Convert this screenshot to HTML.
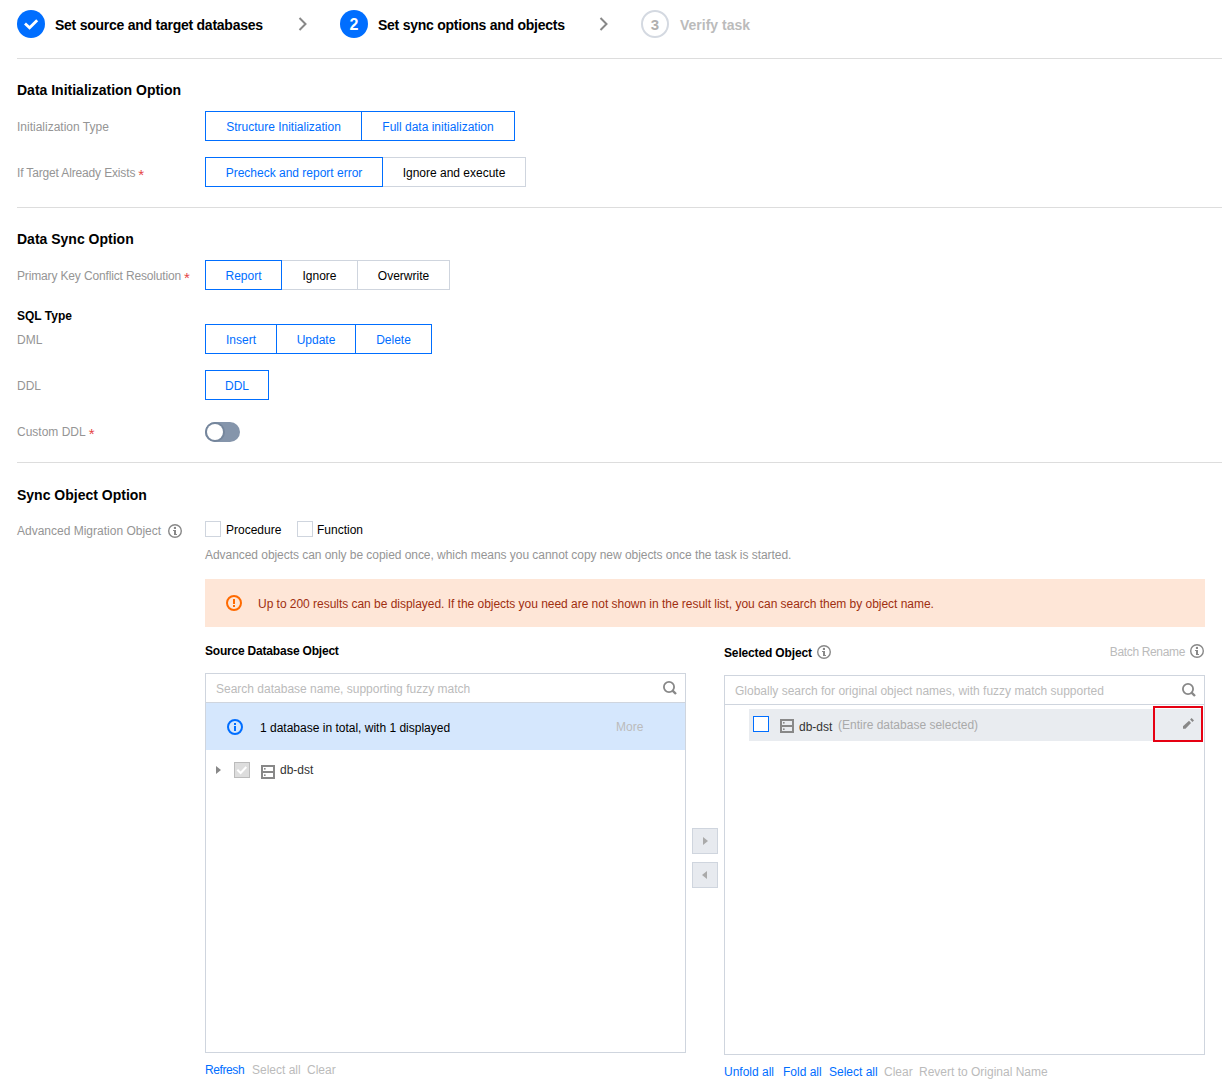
<!DOCTYPE html>
<html><head><meta charset="utf-8">
<style>
*{box-sizing:border-box;margin:0;padding:0}
html,body{width:1222px;height:1090px;overflow:hidden;background:#fff}
body{position:relative;font-family:"Liberation Sans",sans-serif;font-size:12px;color:#000}
.a{position:absolute}
.t{position:absolute;white-space:nowrap;font-size:12px;line-height:16px;height:16px}
.h{position:absolute;white-space:nowrap;font-size:14px;line-height:20px;height:20px;font-weight:bold;color:#000}
.st{letter-spacing:-0.25px}
.lbl{color:#959595}
.req{color:#e54545;margin-left:3px;position:relative;top:3px;font-size:15px;line-height:10px}
.hr{position:absolute;left:17px;right:0;height:1px;background:#dddddd}
.circ{position:absolute;top:10px;width:28px;height:28px;border-radius:50%;background:#006eff;color:#fff;font-weight:bold;font-size:14px;line-height:28px;text-align:center}
.chev{position:absolute;top:17px;width:9px;height:14px}
.btn{position:absolute;height:30px;border:1px solid #cfd5de;background:#fff;color:#000;font-size:12px;line-height:30px;text-align:center;white-space:nowrap}
.btn.on{border-color:#006eff;color:#006eff;z-index:2}
.cb{position:absolute;width:16px;height:16px;border:1px solid #cfd5de;background:#fff}
.box{position:absolute;border:1px solid #cfd5de;background:#fff}
.link{color:#006eff}
.dis{color:#bbb}
</style></head><body>

<!-- Steps -->
<div class="circ" style="left:17px">
 <svg width="28" height="28" viewBox="0 0 28 28" style="position:absolute;left:0;top:0"><path d="M8 13.4 L12.6 17.8 L20.2 10.2" fill="none" stroke="#fff" stroke-width="2.8"/></svg>
</div>
<div class="h st" style="left:55px;top:15px">Set source and target databases</div>
<svg class="chev" style="left:298px" viewBox="0 0 9 14"><path d="M1.5 1 L7.5 7 L1.5 13" fill="none" stroke="#888" stroke-width="2"/></svg>
<div class="circ" style="left:340px;font-size:16px;line-height:30px">2</div>
<div class="h st" style="left:378px;top:15px">Set sync options and objects</div>
<svg class="chev" style="left:599px" viewBox="0 0 9 14"><path d="M1.5 1 L7.5 7 L1.5 13" fill="none" stroke="#888" stroke-width="2"/></svg>
<div class="circ" style="left:641px;background:#fff;border:2px solid #d4d9e1;color:#b0b0b0;line-height:25px;font-size:15px">3</div>
<div class="h" style="left:680px;top:15px;color:#bbb">Verify task</div>
<div class="hr" style="top:58px"></div>

<!-- Data Initialization Option -->
<div class="h" style="left:17px;top:80px">Data Initialization Option</div>
<div class="t lbl" style="left:17px;top:119px">Initialization Type</div>
<div class="btn on" style="left:205px;top:111px;width:157px">Structure Initialization</div>
<div class="btn on" style="left:361px;top:111px;width:154px">Full data initialization</div>
<div class="t lbl" style="left:17px;top:165px;letter-spacing:-0.15px">If Target Already Exists<span class="req">*</span></div>
<div class="btn on" style="left:205px;top:157px;width:178px">Precheck and report error</div>
<div class="btn" style="left:382px;top:157px;width:144px">Ignore and execute</div>
<div class="hr" style="top:207px"></div>

<!-- Data Sync Option -->
<div class="h" style="left:17px;top:229px">Data Sync Option</div>
<div class="t lbl" style="left:17px;top:268px;letter-spacing:-0.15px">Primary Key Conflict Resolution<span class="req">*</span></div>
<div class="btn on" style="left:205px;top:260px;width:77px">Report</div>
<div class="btn" style="left:281px;top:260px;width:77px">Ignore</div>
<div class="btn" style="left:357px;top:260px;width:93px">Overwrite</div>
<div class="t" style="left:17px;top:308px;font-weight:bold">SQL Type</div>
<div class="t lbl" style="left:17px;top:332px">DML</div>
<div class="btn on" style="left:205px;top:324px;width:72px">Insert</div>
<div class="btn on" style="left:276px;top:324px;width:80px">Update</div>
<div class="btn on" style="left:355px;top:324px;width:77px">Delete</div>
<div class="t lbl" style="left:17px;top:378px">DDL</div>
<div class="btn on" style="left:205px;top:370px;width:64px">DDL</div>
<div class="t lbl" style="left:17px;top:424px">Custom DDL<span class="req">*</span></div>
<div class="a" style="left:205px;top:422px;width:35px;height:20px;border-radius:10px;background:#8595ab"></div>
<div class="a" style="left:205px;top:422px;width:20px;height:20px;border-radius:50%;background:#75869c"></div>
<div class="a" style="left:207px;top:424px;width:16px;height:16px;border-radius:50%;background:#fff"></div>
<div class="hr" style="top:462px"></div>

<!-- Sync Object Option -->
<div class="h" style="left:17px;top:485px">Sync Object Option</div>
<div class="t lbl" style="left:17px;top:523px">Advanced Migration Object</div>
<svg class="a" style="left:168px;top:524px" width="14" height="14" viewBox="0 0 14 14"><circle cx="7" cy="7" r="6.3" fill="none" stroke="#888" stroke-width="1.4"/><rect x="5.9" y="2.9" width="2.1" height="2.1" fill="#888"/><path d="M5 6 H8 V10 H9 V11 H6 V7 H5Z" fill="#888"/></svg>
<div class="cb" style="left:205px;top:521px"></div>
<div class="t" style="left:226px;top:522px">Procedure</div>
<div class="cb" style="left:297px;top:521px"></div>
<div class="t" style="left:317px;top:522px">Function</div>
<div class="t lbl" style="left:205px;top:547px;letter-spacing:-0.05px">Advanced objects can only be copied once, which means you cannot copy new objects once the task is started.</div>

<div class="a" style="left:205px;top:579px;width:1000px;height:48px;background:#fee6d7"></div>
<svg class="a" style="left:226px;top:595px" width="16" height="16" viewBox="0 0 16 16"><circle cx="8" cy="8" r="7" fill="none" stroke="#ff6a00" stroke-width="2"/><rect x="7" y="4" width="2" height="5" fill="#ff6a00"/><rect x="7" y="10" width="2" height="2" fill="#ff6a00"/></svg>
<div class="t" style="left:258px;top:596px;color:#a02f10;letter-spacing:-0.03px">Up to 200 results can be displayed. If the objects you need are not shown in the result list, you can search them by object name.</div>

<!-- Transfer -->
<div class="t" style="left:205px;top:643px;font-weight:bold;letter-spacing:-0.2px">Source Database Object</div>
<div class="t" style="left:724px;top:645px;font-weight:bold;letter-spacing:-0.15px">Selected Object</div>
<svg class="a" style="left:817px;top:645px" width="14" height="14" viewBox="0 0 14 14"><circle cx="7" cy="7" r="6.3" fill="none" stroke="#888" stroke-width="1.4"/><rect x="5.9" y="2.9" width="2.1" height="2.1" fill="#888"/><path d="M5 6 H8 V10 H9 V11 H6 V7 H5Z" fill="#888"/></svg>
<div class="t dis" style="right:37px;top:644px;letter-spacing:-0.35px">Batch Rename</div>
<svg class="a" style="left:1190px;top:644px" width="14" height="14" viewBox="0 0 14 14"><circle cx="7" cy="7" r="6.3" fill="none" stroke="#888" stroke-width="1.4"/><rect x="5.9" y="2.9" width="2.1" height="2.1" fill="#888"/><path d="M5 6 H8 V10 H9 V11 H6 V7 H5Z" fill="#888"/></svg>

<!-- left box -->
<div class="box" style="left:205px;top:673px;width:481px;height:380px"></div>
<div class="a" style="left:206px;top:702px;width:479px;height:1px;background:#cfd5de"></div>
<div class="t" style="left:216px;top:681px;color:#bbb">Search database name, supporting fuzzy match</div>
<svg class="a" style="left:663px;top:681px" width="14" height="14" viewBox="0 0 14 14"><circle cx="6" cy="6" r="5.1" fill="none" stroke="#888" stroke-width="1.8"/><path d="M9.6 9.6 L13 13" stroke="#888" stroke-width="2.4"/></svg>
<div class="a" style="left:206px;top:703px;width:479px;height:47px;background:#d5e7fd"></div>
<svg class="a" style="left:227px;top:719px" width="16" height="16" viewBox="0 0 16 16"><circle cx="8" cy="8" r="7" fill="none" stroke="#006eff" stroke-width="2"/><rect x="7" y="4" width="2" height="2" fill="#006eff"/><rect x="7" y="7" width="2" height="5" fill="#006eff"/></svg>
<div class="t" style="left:260px;top:720px">1 database in total, with 1 displayed</div>
<div class="t dis" style="left:616px;top:719px">More</div>

<svg class="a" style="left:216px;top:766px" width="5" height="8" viewBox="0 0 5 8"><path d="M0 0 L5 4 L0 8Z" fill="#888"/></svg>
<div class="a" style="left:234px;top:762px;width:16px;height:16px;background:#dddddd;border:1px solid #bbbbbb"></div>
<svg class="a" style="left:234px;top:762px" width="16" height="16" viewBox="0 0 16 16"><path d="M3.3 7.7 L6.6 11 L12.3 5" fill="none" stroke="#fff" stroke-width="2"/></svg>
<svg class="a" style="left:261px;top:765px" width="14" height="14" viewBox="0 0 14 14"><rect x="1" y="1" width="12" height="12" fill="none" stroke="#888" stroke-width="2"/><rect x="1" y="6" width="12" height="2" fill="#888"/><rect x="3" y="3" width="1.6" height="1.6" fill="#888"/><rect x="3" y="9.4" width="1.6" height="1.6" fill="#888"/></svg>
<div class="t" style="left:280px;top:762px;color:#333">db-dst</div>

<!-- transfer buttons -->
<div class="a" style="left:692px;top:828px;width:26px;height:26px;background:#e7eaef;border:1px solid #cfd5de"></div>
<svg class="a" style="left:703px;top:837px" width="5" height="8" viewBox="0 0 5 8"><path d="M0 0 L5 4 L0 8Z" fill="#aaa"/></svg>
<div class="a" style="left:692px;top:862px;width:26px;height:26px;background:#e7eaef;border:1px solid #cfd5de"></div>
<svg class="a" style="left:702px;top:871px" width="5" height="8" viewBox="0 0 5 8"><path d="M5 0 L0 4 L5 8Z" fill="#aaa"/></svg>

<!-- right box -->
<div class="box" style="left:724px;top:675px;width:481px;height:380px"></div>
<div class="a" style="left:725px;top:704px;width:479px;height:1px;background:#cfd5de"></div>
<div class="t" style="left:735px;top:683px;color:#bbb">Globally search for original object names, with fuzzy match supported</div>
<svg class="a" style="left:1182px;top:683px" width="14" height="14" viewBox="0 0 14 14"><circle cx="6" cy="6" r="5.1" fill="none" stroke="#888" stroke-width="1.8"/><path d="M9.6 9.6 L13 13" stroke="#888" stroke-width="2.4"/></svg>
<div class="a" style="left:749px;top:709px;width:452px;height:32px;background:#e9ecf0"></div>
<div class="a" style="left:753px;top:716px;width:16px;height:16px;background:#fff;border:1px solid #006eff"></div>
<svg class="a" style="left:780px;top:719px" width="14" height="14" viewBox="0 0 14 14"><rect x="1" y="1" width="12" height="12" fill="none" stroke="#888" stroke-width="2"/><rect x="1" y="6" width="12" height="2" fill="#888"/><rect x="3" y="3" width="1.6" height="1.6" fill="#888"/><rect x="3" y="9.4" width="1.6" height="1.6" fill="#888"/></svg>
<div class="t" style="left:799px;top:719px;color:#333">db-dst</div>
<div class="t dis" style="left:838px;top:717px;color:#aaa">(Entire database selected)</div>
<div class="a" style="left:1153px;top:706px;width:50px;height:36px;border:2px solid #e60012"></div>
<svg class="a" style="left:1176px;top:712px" width="24" height="24" viewBox="0 0 24 24"><path d="M7 16.7 L7 14.3 L13 8.8 L15 11 L9.5 16.7Z" fill="#888"/><path d="M14.1 7.5 L15.6 6 L18 8.5 L16.4 9.9Z" fill="#888"/></svg>

<!-- footers -->
<div class="t link" style="left:205px;top:1062px;letter-spacing:-0.4px">Refresh</div>
<div class="t dis" style="left:252px;top:1062px">Select all</div>
<div class="t dis" style="left:307px;top:1062px">Clear</div>
<div class="t link" style="left:724px;top:1064px">Unfold all</div>
<div class="t link" style="left:783px;top:1064px">Fold all</div>
<div class="t link" style="left:829px;top:1064px">Select all</div>
<div class="t dis" style="left:884px;top:1064px">Clear</div>
<div class="t dis" style="left:919px;top:1064px">Revert to Original Name</div>

</body></html>
